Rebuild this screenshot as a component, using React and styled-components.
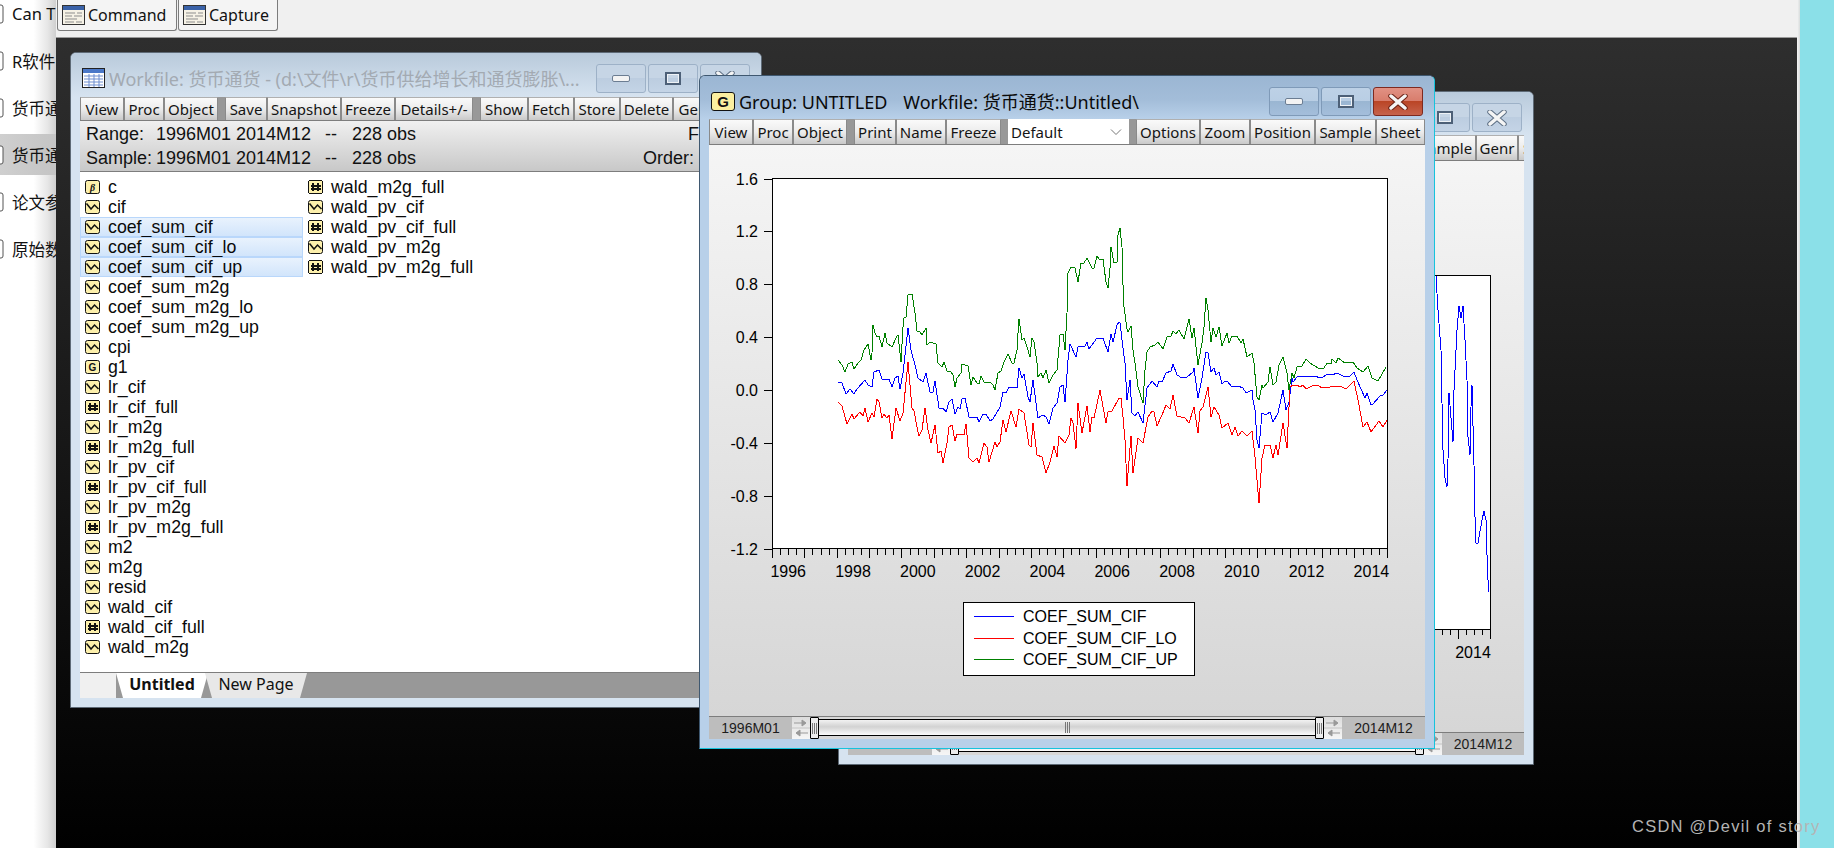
import React from 'react'
import styled, { createGlobalStyle } from 'styled-components'

const GlobalStyle = createGlobalStyle`
  html, body { margin: 0; padding: 0; background: #000; }
  #root { width: 1834px; height: 848px; overflow: hidden; }
`

const UI = '"Noto Sans", "Noto Sans CJK SC", sans-serif'
const ARIAL = '"Liberation Sans", Arial, sans-serif'

// chart traces, in page pixels (the svg viewBox uses the same numbers)
const GREEN = '838,360 842,365 845,372 848,364 852,362 854,369 858,363 861,360 864,350 868,344 871,360 872,353 873,325 875,333 877,337 879,336 882,347 885,333 887,343 892,347 897,336 898,335 901,362 903,327 904,318 906,317 908,295 912,294 915,313 917,331 920,332 922,335 926,328 927,345 930,342 936,344 938,363 942,367 944,362 947,371 951,372 953,375 955,387 957,378 961,373 962,364 968,366 971,385 973,377 977,383 979,384 981,376 984,382 988,382 991,383 993,385 995,390 998,373 1001,371 1004,362 1008,354 1012,363 1014,363 1017,350 1018,333 1019,319 1022,340 1024,338 1027,347 1030,357 1032,338 1034,342 1037,363 1038,377 1041,373 1043,378 1046,370 1049,383 1053,375 1057,370 1059,347 1060,335 1063,334 1065,350 1067,313 1068,273 1071,267 1075,268 1078,282 1081,263 1084,263 1087,258 1092,268 1094,268 1097,256 1100,260 1103,259 1106,282 1108,288 1110,268 1111,247 1114,263 1117,262 1118,235 1120,228 1122,247 1123,285 1124,307 1127,329 1128,332 1131,326 1133,350 1135,363 1138,387 1143,403 1145,370 1147,352 1150,347 1155,345 1158,342 1163,349 1167,337 1171,336 1173,331 1176,334 1179,330 1184,339 1187,327 1189,319 1192,338 1194,328 1198,365 1202,343 1204,327 1206,298 1208,310 1211,342 1213,328 1216,337 1219,327 1222,346 1227,333 1229,343 1232,336 1237,336 1241,343 1243,339 1247,357 1252,353 1254,363 1257,397 1259,400 1262,385 1263,388 1268,382 1270,367 1273,385 1276,382 1279,365 1283,357 1287,373 1289,390 1292,373 1294,378 1297,367 1302,366 1306,359 1310,363 1318,368 1324,368 1327,363 1331,364 1332,359 1336,363 1338,358 1345,363 1353,362 1357,368 1363,372 1368,366 1372,378 1378,381 1386,367'
const BLUE = '838,382 842,383 846,394 850,389 854,394 857,389 865,380 868,385 872,387 874,372 879,370 882,379 889,379 892,387 895,378 898,376 900,389 903,373 908,328 911,350 915,365 918,378 923,382 926,373 930,392 933,392 935,381 939,408 943,408 946,412 949,402 952,399 955,414 958,407 960,409 962,399 965,398 969,417 977,417 979,422 983,414 986,414 990,421 993,419 1000,407 1003,392 1006,393 1009,387 1017,388 1019,368 1022,378 1024,374 1028,397 1030,402 1033,380 1038,418 1043,415 1046,417 1049,424 1053,408 1057,403 1060,387 1063,385 1065,402 1068,360 1070,344 1076,357 1078,347 1085,346 1087,342 1089,349 1097,338 1103,338 1108,352 1111,334 1113,342 1117,325 1119,322 1120,323 1123,348 1125,363 1127,400 1130,380 1132,413 1135,416 1138,412 1143,423 1147,388 1152,381 1157,387 1159,381 1162,382 1166,373 1171,371 1173,364 1177,375 1182,378 1187,377 1193,372 1194,368 1198,398 1202,378 1206,352 1208,353 1211,372 1214,368 1216,375 1219,372 1222,384 1225,381 1228,382 1231,386 1238,386 1243,388 1246,393 1252,390 1253,400 1255,410 1257,440 1259,448 1262,413 1266,415 1270,412 1273,422 1278,413 1283,390 1286,410 1289,402 1292,378 1293,382 1297,377 1313,376 1322,378 1327,374 1332,375 1337,373 1343,376 1350,376 1354,372 1357,380 1365,398 1367,393 1371,405 1373,404 1380,396 1383,395 1387,390'
const RED = '838,402 842,406 847,424 852,414 854,419 860,412 863,416 865,408 868,422 872,413 874,417 877,399 879,402 882,418 884,414 887,418 889,415 892,439 896,408 900,421 903,413 908,362 912,408 914,411 917,427 919,436 922,430 925,408 928,430 931,443 935,425 938,453 941,451 943,463 947,443 949,427 952,425 955,441 957,434 964,435 966,424 969,458 973,462 977,458 979,463 984,443 987,447 989,462 995,442 997,447 1000,442 1003,420 1006,432 1011,411 1016,427 1019,409 1024,413 1029,445 1031,447 1033,423 1037,455 1042,457 1046,473 1050,462 1054,446 1057,457 1059,436 1065,443 1069,435 1071,418 1073,423 1076,449 1078,403 1082,433 1087,406 1090,432 1092,417 1094,418 1100,390 1106,423 1108,412 1112,411 1119,398 1121,398 1123,417 1125,440 1127,486 1131,436 1133,473 1138,438 1143,443 1148,417 1152,411 1154,412 1157,426 1162,415 1166,405 1170,409 1173,395 1177,416 1185,418 1189,423 1194,407 1198,433 1200,411 1203,407 1208,387 1211,417 1214,407 1219,415 1222,428 1228,423 1232,435 1235,427 1238,436 1242,431 1247,436 1252,431 1255,457 1259,503 1262,458 1265,445 1270,445 1273,458 1276,445 1278,455 1283,423 1287,448 1290,387 1293,385 1297,385 1300,387 1303,385 1306,389 1312,386 1318,385 1322,388 1330,387 1340,386 1346,389 1354,381 1358,400 1363,427 1367,422 1371,432 1379,421 1383,427 1387,420'
const BACK_BLUE = '1436,276 1438,310 1441,350 1442,403 1443,450 1445,478 1447,487 1448,460 1449,393 1452,430 1453,442 1454,390 1457,330 1459,306 1461,318 1463,306 1465,340 1467,380 1468,437 1470,455 1471,407 1472,385 1474,465 1475,517 1476,543 1478,543 1482,520 1484,511 1486,520 1487,555 1488,580 1489,592'

const ITEMS = [
  ['c', 'coef'], ['cif', 'series'], ['coef_sum_cif', 'series', 1], ['coef_sum_cif_lo', 'series', 1],
  ['coef_sum_cif_up', 'series', 1], ['coef_sum_m2g', 'series'], ['coef_sum_m2g_lo', 'series'],
  ['coef_sum_m2g_up', 'series'], ['cpi', 'series'], ['g1', 'group'], ['lr_cif', 'series'],
  ['lr_cif_full', 'hash'], ['lr_m2g', 'series'], ['lr_m2g_full', 'hash'], ['lr_pv_cif', 'series'],
  ['lr_pv_cif_full', 'hash'], ['lr_pv_m2g', 'series'], ['lr_pv_m2g_full', 'hash'], ['m2', 'series'],
  ['m2g', 'series'], ['resid', 'series'], ['wald_cif', 'series'], ['wald_cif_full', 'hash'],
  ['wald_m2g', 'series'], ['wald_m2g_full', 'hash'], ['wald_pv_cif', 'series'],
  ['wald_pv_cif_full', 'hash'], ['wald_pv_m2g', 'series'], ['wald_pv_m2g_full', 'hash'],
]

const SIDE = ['Can T', 'R软件', '货币通货', '货币通货', '论文参考', '原始数据']

const Page = styled.div`
  position: relative;
  display: flex;
  width: 1834px;
  height: 848px;
  overflow: hidden;
  background: #8be0e8;
`
const Sidebar = styled.div`
  width: 56px;
  flex: none;
  overflow: hidden;
  background: linear-gradient(90deg, #fff 60%, #e6e6e6 85%, #cfcfcf 100%);
`
const SideList = styled.div`
  margin-top: -7px;
`
const SideItem = styled.div`
  height: 41px;
  margin-bottom: 6px;
  display: flex;
  align-items: center;
  gap: 8px;
  font: 16.5px ${UI};
  color: #111;
  white-space: nowrap;
  background: ${p => (p.$active ? 'linear-gradient(90deg, #cfcfcf, #c4c4c4)' : 'transparent')};
`
const DocSliver = styled.svg`
  margin-left: -12px;
  flex: none;
`
const Main = styled.div`
  width: 1741px;
  flex: none;
  display: flex;
  flex-direction: column;
`
const TopBar = styled.div`
  height: 37px;
  flex: none;
  display: flex;
  align-items: flex-start;
  gap: 1px;
  padding-left: 1px;
  background: #f0f0f0;
  border-bottom: 1px solid #9a9a9a;
`
const TopButton = styled.div`
  box-sizing: border-box;
  width: ${p => p.$w}px;
  height: 31px;
  display: flex;
  align-items: center;
  gap: 3px;
  padding: 0 0 0 4px;
  border: 1px solid #7c7c7c;
  border-top: none;
  border-radius: 0 0 3px 3px;
  background: #f4f4f4;
  font: 16px ${UI};
  color: #111;
`
const Desktop = styled.div`
  position: relative;
  flex: 1;
  background: linear-gradient(180deg, #2e2e2e 0%, #000 100%);
`
const RightStrip = styled.div`
  width: 3px;
  flex: none;
  background: linear-gradient(90deg, #f4f4f4, #d8dcdc);
`
const Watermark = styled.div`
  position: absolute;
  left: 1632px;
  top: 817px;
  font: 16.5px ${ARIAL};
  letter-spacing: 1.25px;
  color: #b4b4b4;
  white-space: nowrap;
`

const Win = styled.div`
  position: absolute;
  left: ${p => p.$left}px;
  top: ${p => p.$top}px;
  width: ${p => p.$w}px;
  height: ${p => p.$h}px;
  box-sizing: border-box;
  display: flex;
  flex-direction: column;
  padding: 0 9px 9px;
  border: 1px solid ${p => (p.$active ? '#3f5870' : '#5e6a76')};
  border-right-color: ${p => (p.$active ? '#16c3dc' : '#5e6a76')};
  border-bottom-color: ${p => (p.$active ? '#16c3dc' : '#5e6a76')};
  border-radius: 6px 6px 0 0;
  background: ${p => (p.$active ? '#b8d0e9' : '#d6e3f0')};
  overflow: hidden;
`
const TitleRow = styled.div`
  height: ${p => p.$h}px;
  flex: none;
  margin: 0 -9px;
  padding: 0 11px;
  box-sizing: border-box;
  display: flex;
  align-items: flex-start;
  background: ${p =>
    p.$active
      ? 'linear-gradient(180deg, #9bb6d3 0%, #a3bdd9 55%, #b8d0e9 100%)'
      : 'linear-gradient(180deg, #b9cadb 0%, #c9d8e7 55%, #d6e3f0 100%)'};
`
const TitleText = styled.div`
  margin-top: 14px;
  margin-left: 4px;
  font: 18px/24px ${UI};
  color: ${p => (p.$active ? '#0a0a0a' : '#a3aab2')};
  white-space: nowrap;
`
const TitleGap = styled.span`
  margin-left: 16px;
`
const TitleIcon = styled.div`
  margin-top: ${p => p.$top}px;
  flex: none;
  display: flex;
`
const GroupBadge = styled.div`
  box-sizing: border-box;
  width: 24px;
  height: 19px;
  display: flex;
  align-items: center;
  justify-content: center;
  border: 1px solid #111;
  border-radius: 3px;
  background: #fbefa0;
  font: bold 15px ${ARIAL};
  color: #111;
`
const WinButtons = styled.div`
  margin-left: auto;
  margin-top: 11px;
  display: flex;
  gap: 2px;
  flex: none;
`
const WinBtn = styled.div`
  box-sizing: border-box;
  width: 50px;
  height: 29px;
  display: flex;
  align-items: center;
  justify-content: center;
  border: 1px solid ${p => (p.$close ? '#7e2a20' : p.$active ? '#7f9ab8' : '#9db1c7')};
  border-radius: 3px;
  background: ${p =>
    p.$close
      ? 'linear-gradient(180deg, #e19184 0%, #d87d6c 48%, #ba4526 50%, #c6634c 100%)'
      : p.$active
        ? 'linear-gradient(180deg, #bdd1e6 0%, #b9cee4 48%, #9ab6d2 50%, #a4bedb 100%)'
        : 'linear-gradient(180deg, #c6d5e5 0%, #c6d5e5 48%, #bccde0 50%, #c4d4e6 100%)'};
`
const Toolbar = styled.div`
  height: ${p => p.$h}px;
  flex: none;
  box-sizing: border-box;
  display: flex;
  overflow: hidden;
  border-bottom: 1px solid #7d7d7d;
  background: #9a9a9a;
`
const ToolBtn = styled.div`
  box-sizing: border-box;
  width: ${p => p.$w}px;
  flex: none;
  display: flex;
  align-items: center;
  justify-content: center;
  overflow: hidden;
  border-left: 1px solid #8a8a8a;
  border-right: 1px solid #8a8a8a;
  border-top: 1px solid #b0b0b0;
  background: linear-gradient(180deg, #fafafa 0%, #ececec 50%, #c9c9c9 100%);
  font: 15px ${UI};
  color: #141414;
  white-space: nowrap;
`
const ToolSep = styled.div`
  width: ${p => p.$w || 7}px;
  flex: none;
  background: #989898;
`
const Combo = styled.div`
  width: ${p => p.$w}px;
  flex: none;
  box-sizing: border-box;
  display: flex;
  align-items: center;
  justify-content: space-between;
  padding: 0 7px 0 3px;
  background: #fff;
  font: 15px ${UI};
  color: #141414;
`

const InfoBar = styled.div`
  height: 51px;
  flex: none;
  box-sizing: border-box;
  padding: 1px 0 0 6px;
  border-bottom: 1px solid #7d7d7d;
  background: linear-gradient(180deg, #f0f0f0 0%, #c8c8c8 100%);
  font: 18px/24px ${ARIAL};
  color: #111;
  overflow: hidden;
`
const InfoRow = styled.div`
  display: grid;
  grid-template-columns: 70px 169px 27px 100px 1fr;
  white-space: nowrap;
`
const InfoRight = styled.div`
  padding-left: ${p => p.$pad}px;
`
const ListArea = styled.div`
  flex: 1;
  min-height: 0;
  box-sizing: border-box;
  padding-top: 5px;
  display: grid;
  grid-auto-flow: column;
  grid-template-rows: repeat(24, 20px);
  grid-auto-columns: 223px;
  background: #fff;
  overflow: hidden;
`
const ListRow = styled.div`
  box-sizing: border-box;
  display: flex;
  align-items: center;
  gap: 8px;
  padding-left: 5px;
  font: 17.75px ${ARIAL};
  color: #0a0a0a;
  white-space: nowrap;
  ${p =>
    p.$sel &&
    `background: linear-gradient(180deg, #eaf3fd 0%, #d0e4fb 100%);
     box-shadow: inset 0 0 0 1px #b9d7fb;`}
`
const TabBar = styled.div`
  height: 26px;
  flex: none;
  box-sizing: border-box;
  display: flex;
  border-top: 1px solid #7d7d7d;
  background: #989898;
`
const TabBlank = styled.div`
  width: 36px;
  flex: none;
  background: #f0f0f0;
`
const Tab = styled.div`
  box-sizing: border-box;
  width: ${p => p.$w}px;
  margin-left: ${p => p.$ml}px;
  padding-bottom: 3px;
  flex: none;
  display: flex;
  align-items: center;
  justify-content: center;
  clip-path: polygon(0 0, 100% 0, calc(100% - 7px) 100%, 7px 100%);
  background: ${p => (p.$on ? '#fff' : '#e8e8e8')};
  font: ${p => (p.$on ? 'bold' : 'normal')} 16px ${UI};
  color: #111;
`

const GraphPanel = styled.div`
  flex: 1;
  min-height: 0;
  display: flex;
  flex-direction: column;
  background: linear-gradient(180deg, #f5f5f5 0%, #d6d6d6 100%);
  overflow: hidden;
`
const Legend = styled.div`
  box-sizing: border-box;
  width: 232px;
  height: 74px;
  margin-left: 254px;
  flex: none;
  padding: 3px 0 0 10px;
  border: 1px solid #000;
  background: #fff;
  font: 16px/21.5px ${ARIAL};
  color: #000;
`
const LegendRow = styled.div`
  display: flex;
  align-items: center;
  gap: 9px;
`
const LegendLine = styled.div`
  width: 40px;
  height: 1px;
  background: ${p => p.$c};
`
const Spacer = styled.div`
  flex: 1;
`
const SliderRow = styled.div`
  height: 23px;
  flex: none;
  box-sizing: border-box;
  display: flex;
  border-top: 1px solid #7d7d7d;
  background: #d8d8d8;
`
const SliderLabel = styled.div`
  width: ${p => p.$w}px;
  flex: none;
  display: flex;
  align-items: center;
  justify-content: center;
  background: #bdbdbd;
  font: 14px ${ARIAL};
  color: #1c1c1c;
`
const ArrowCell = styled.svg`
  flex: none;
  display: block;
  background: linear-gradient(180deg, #dcdcdc, #f6f6f6);
`
const Thumb = styled.div`
  box-sizing: border-box;
  width: 9px;
  flex: none;
  display: flex;
  align-items: center;
  justify-content: center;
  border: 1px solid #000;
  border-radius: 1px;
  background: #ececec;
`
const Grip = styled.div`
  width: ${p => p.$w}px;
  height: 11px;
  background: repeating-linear-gradient(90deg, #777 0 1px, transparent 1px 2px);
`
const Track = styled.div`
  flex: 1;
  box-sizing: border-box;
  margin: 2px 0 3px;
  display: flex;
  align-items: center;
  justify-content: center;
  border-top: 1px solid #000;
  border-bottom: 1px solid #000;
  background: linear-gradient(180deg, #f2f2f2 0%, #d2d2d2 45%, #fbfbfb 100%);
`

const Polyline = ({ pts, c }) => <polyline points={pts} fill="none" stroke={c} strokeWidth="1" />

const WinGlyph = ({ kind, active }) => {
  if (kind === 'min') return (
    <svg width="18" height="8"><rect x="0.5" y="0.5" width="17" height="6" rx="1.5" fill="#f3f3f3" stroke="#6b7d92" /></svg>
  )
  if (kind === 'max') return (
    <svg width="16" height="13"><rect x="1" y="1" width="14" height="11" fill="none" stroke="#4d6077" strokeWidth="2" /><rect x="2.5" y="2.5" width="11" height="8" fill="none" stroke="#eef2f6" /></svg>
  )
  return (
    <svg width="22" height="16">
      <path d="M4 2 L18 14 M18 2 L4 14" stroke={active ? '#6d2316' : '#5f7186'} strokeWidth="5.5" strokeLinecap="round" />
      <path d="M4 2 L18 14 M18 2 L4 14" stroke="#f5f5f5" strokeWidth="3.5" strokeLinecap="round" />
    </svg>
  )
}

const TableIcon = () => (
  <svg width="23" height="20">
    <rect x="0.5" y="0.5" width="22" height="19" fill="#fff" stroke="#222" />
    <rect x="1" y="1" width="21" height="4" fill="#4a78c8" />
    <path d="M2 8h19M2 11h19M2 14h19M2 17h19M7 6v13M12 6v13M17 6v13" stroke="#6f8fd0" strokeWidth="1" />
  </svg>
)
const ConsoleIcon = () => (
  <svg width="23" height="20" style={{ flex: 'none' }}>
    <rect x="0.5" y="0.5" width="22" height="19" fill="#f6f2e6" stroke="#333" />
    <rect x="1" y="1" width="21" height="4" fill="#3a62a8" />
    <path d="M3 8h10M15 8h5M3 11h7M12 11h8M3 14h12M3 17h9M14 17h6" stroke="#8d8d8d" strokeWidth="1" />
  </svg>
)
const ObjIcon = ({ type }) => (
  <svg width="15" height="14" style={{ flex: 'none' }} shapeRendering={type === 'hash' ? 'crispEdges' : undefined}>
    <rect x="0.5" y="0.5" width="14" height="13" rx="2" fill="#fdf0ac" stroke="#111" />
    {type === 'series' && <polyline points="1.5,3.5 6,9 9.5,5 13.5,9" fill="none" stroke="#111" strokeWidth="1.5" />}
    {type === 'hash' && <path d="M5 3v8M9.5 3v8M2.5 5.5h10M2.5 8.5h10" stroke="#111" strokeWidth="2" />}
    {type === 'coef' && <text x="7.5" y="11" textAnchor="middle" fontSize="10" fontWeight="bold" fontStyle="italic" fontFamily="Liberation Serif, serif" fill="#111">β</text>}
    {type === 'group' && <text x="7.5" y="11" textAnchor="middle" fontSize="10" fontWeight="bold" fontFamily="Liberation Sans, sans-serif" fill="#111">G</text>}
  </svg>
)

const Arrows = () => (
  <ArrowCell width="18" height="22">
    <path d="M2 6h11M10 3L14 6 10 9z" stroke="#999" fill="#999" />
    <path d="M16 16H5M8 13L4 16 8 19z" stroke="#999" fill="#999" />
    <path d="M0 11h18" stroke="#c4c4c4" />
  </ArrowCell>
)

const Slider = ({ leftW, rightW }) => (
  <SliderRow>
    <SliderLabel $w={leftW}>1996M01</SliderLabel>
    <Arrows />
    <Thumb><Grip $w={5} /></Thumb>
    <Track><Grip $w={5} /></Track>
    <Thumb><Grip $w={5} /></Thumb>
    <Arrows />
    <SliderLabel $w={rightW}>2014M12</SliderLabel>
  </SliderRow>
)

const chartText = { fontFamily: 'Liberation Sans, Arial, sans-serif', fontSize: 16, fill: '#000' }

const MainChart = () => {
  const quarters = Array.from({ length: 77 }, (_, i) => i)
  const years = [1996, 1998, 2000, 2002, 2004, 2006, 2008, 2010, 2012, 2014]
  const vals = ['1.6', '1.2', '0.8', '0.4', '0.0', '-0.4', '-0.8', '-1.2']
  return (
    <svg width="716" height="457" viewBox="709 145 716 457" style={{ display: 'block', flex: 'none' }}>
      <g shapeRendering="crispEdges">
        <rect x="772.5" y="178.5" width="615" height="370" fill="#fff" stroke="#000" />
        {vals.map((v, i) => {
          const y = 178.5 + i * 52.9
          return <line key={v} x1="764" x2="772" y1={Math.round(y) + 0.5} y2={Math.round(y) + 0.5} stroke="#000" />
        })}
        {quarters.map(i => {
          const x = Math.round(772 + i * 8.09) + 0.5
          return <line key={i} x1={x} x2={x} y1="549" y2={i % 4 === 0 ? 558 : 555} stroke="#000" />
        })}
        <Polyline pts={BLUE} c="#0000ff" />
        <Polyline pts={RED} c="#ff0000" />
        <Polyline pts={GREEN} c="#008000" />
      </g>
      {vals.map((v, i) => (
        <text key={v} x="758" y={178.5 + i * 52.9 + 6} textAnchor="end" {...chartText}>{v}</text>
      ))}
      {years.map(y => (
        <text key={y} x={772 + (y - 1996 + 0.5) * 32.4} y="577" textAnchor="middle" {...chartText}>{y}</text>
      ))}
    </svg>
  )
}

const BackChart = () => {
  const ticks = [1442, 1450, 1458, 1466, 1474, 1482, 1490]
  return (
    <svg width="676" height="569" viewBox="848 161 676 569" style={{ display: 'block', flex: 'none' }}>
      <g shapeRendering="crispEdges">
        <rect x="1400.5" y="275.5" width="90" height="354" fill="#fff" stroke="#000" />
        {ticks.map(x => (
          <line key={x} x1={x + 0.5} x2={x + 0.5} y1="630" y2={x === 1458 || x === 1490 ? 639 : 635} stroke="#000" />
        ))}
        <Polyline pts={BACK_BLUE} c="#0000ff" />
      </g>
      <text x="1473" y="658" textAnchor="middle" {...chartText}>2014</text>
    </svg>
  )
}

const App = () => {
  return (
    <Page>
      <GlobalStyle />
      <Sidebar>
        <SideList>
          {SIDE.map((s, i) => (
            <SideItem key={i} $active={i === 3}>
              <DocSliver width="16" height="20">
                <rect x="1" y="1" width="14" height="18" rx="2" fill="#fff" stroke="#555" />
              </DocSliver>
              {s}
            </SideItem>
          ))}
        </SideList>
      </Sidebar>

      <Main>
        <TopBar>
          <TopButton $w={120}><ConsoleIcon />Command</TopButton>
          <TopButton $w={100}><ConsoleIcon />Capture</TopButton>
        </TopBar>
        <Desktop>
          {/* series window behind the group */}
          <Win $left={782} $top={53} $w={696} $h={674}>
            <TitleRow $h={43}>
              <WinButtons>
                <WinBtn><WinGlyph kind="min" /></WinBtn>
                <WinBtn><WinGlyph kind="max" /></WinBtn>
                <WinBtn><WinGlyph kind="close" /></WinBtn>
              </WinButtons>
            </TitleRow>
            <Toolbar $h={26}>
              <ToolBtn $w={568}>View</ToolBtn>
              <ToolBtn $w={60}>Sample</ToolBtn>
              <ToolBtn $w={42}>Genr</ToolBtn>
              <ToolBtn $w={50}>Sheet</ToolBtn>
            </Toolbar>
            <GraphPanel>
              <BackChart />
              <Spacer />
            </GraphPanel>
            <Slider leftW={84} rightW={82} />
          </Win>

          {/* workfile window */}
          <Win $left={14} $top={14} $w={692} $h={656}>
            <TitleRow $h={44}>
              <TitleIcon $top={15}><TableIcon /></TitleIcon>
              <TitleText>Workfile: 货币通货 - (d:\文件\r\货币供给增长和通货膨胀\...</TitleText>
              <WinButtons>
                <WinBtn><WinGlyph kind="min" /></WinBtn>
                <WinBtn><WinGlyph kind="max" /></WinBtn>
                <WinBtn><WinGlyph kind="close" /></WinBtn>
              </WinButtons>
            </TitleRow>
            <Toolbar $h={24}>
              <ToolBtn $w={44}>View</ToolBtn>
              <ToolBtn $w={40}>Proc</ToolBtn>
              <ToolBtn $w={54}>Object</ToolBtn>
              <ToolSep />
              <ToolBtn $w={42}>Save</ToolBtn>
              <ToolBtn $w={74}>Snapshot</ToolBtn>
              <ToolBtn $w={54}>Freeze</ToolBtn>
              <ToolBtn $w={78}>Details+/-</ToolBtn>
              <ToolSep />
              <ToolBtn $w={48}>Show</ToolBtn>
              <ToolBtn $w={46}>Fetch</ToolBtn>
              <ToolBtn $w={46}>Store</ToolBtn>
              <ToolBtn $w={53}>Delete</ToolBtn>
              <ToolBtn $w={46}>Genr</ToolBtn>
            </Toolbar>
            <InfoBar>
              <InfoRow>
                <div>Range:</div><div>1996M01 2014M12</div><div>--</div><div>228 obs</div>
                <InfoRight $pad={236}>Filter: *</InfoRight>
              </InfoRow>
              <InfoRow>
                <div>Sample:</div><div>1996M01 2014M12</div><div>--</div><div>228 obs</div>
                <InfoRight $pad={191}>Order: Name</InfoRight>
              </InfoRow>
            </InfoBar>
            <ListArea>
              {ITEMS.map(([name, type, sel]) => (
                <ListRow key={name} $sel={sel}><ObjIcon type={type} />{name}</ListRow>
              ))}
            </ListArea>
            <TabBar>
              <TabBlank />
              <Tab $w={92} $ml={0} $on>Untitled</Tab>
              <Tab $w={102} $ml={-3}>New Page</Tab>
            </TabBar>
          </Win>

          {/* active group graph */}
          <Win $active $left={643} $top={37} $w={736} $h={674}>
            <TitleRow $active $h={43}>
              <TitleIcon $top={16}><GroupBadge>G</GroupBadge></TitleIcon>
              <TitleText $active>Group: UNTITLED<TitleGap>Workfile: 货币通货::Untitled\</TitleGap></TitleText>
              <WinButtons>
                <WinBtn $active><WinGlyph kind="min" /></WinBtn>
                <WinBtn $active><WinGlyph kind="max" /></WinBtn>
                <WinBtn $active $close><WinGlyph kind="close" active /></WinBtn>
              </WinButtons>
            </TitleRow>
            <Toolbar $h={26}>
              <ToolBtn $w={44}>View</ToolBtn>
              <ToolBtn $w={40}>Proc</ToolBtn>
              <ToolBtn $w={54}>Object</ToolBtn>
              <ToolSep />
              <ToolBtn $w={42}>Print</ToolBtn>
              <ToolBtn $w={50}>Name</ToolBtn>
              <ToolBtn $w={55}>Freeze</ToolBtn>
              <ToolSep />
              <Combo $w={121}>
                Default
                <svg width="12" height="8"><path d="M1 1.5L6 6.5 11 1.5" fill="none" stroke="#777" strokeWidth="1" /></svg>
              </Combo>
              <ToolSep />
              <ToolBtn $w={64}>Options</ToolBtn>
              <ToolBtn $w={50}>Zoom</ToolBtn>
              <ToolBtn $w={65}>Position</ToolBtn>
              <ToolBtn $w={61}>Sample</ToolBtn>
              <ToolBtn $w={49}>Sheet</ToolBtn>
            </Toolbar>
            <GraphPanel>
              <MainChart />
              <Legend>
                <LegendRow><LegendLine $c="#0000ff" />COEF_SUM_CIF</LegendRow>
                <LegendRow><LegendLine $c="#ff0000" />COEF_SUM_CIF_LO</LegendRow>
                <LegendRow><LegendLine $c="#008000" />COEF_SUM_CIF_UP</LegendRow>
              </Legend>
              <Spacer />
            </GraphPanel>
            <Slider leftW={83} rightW={83} />
          </Win>
        </Desktop>
      </Main>
      <RightStrip />
      <Watermark>CSDN @Devil of story</Watermark>
    </Page>
  )
}

export default App
